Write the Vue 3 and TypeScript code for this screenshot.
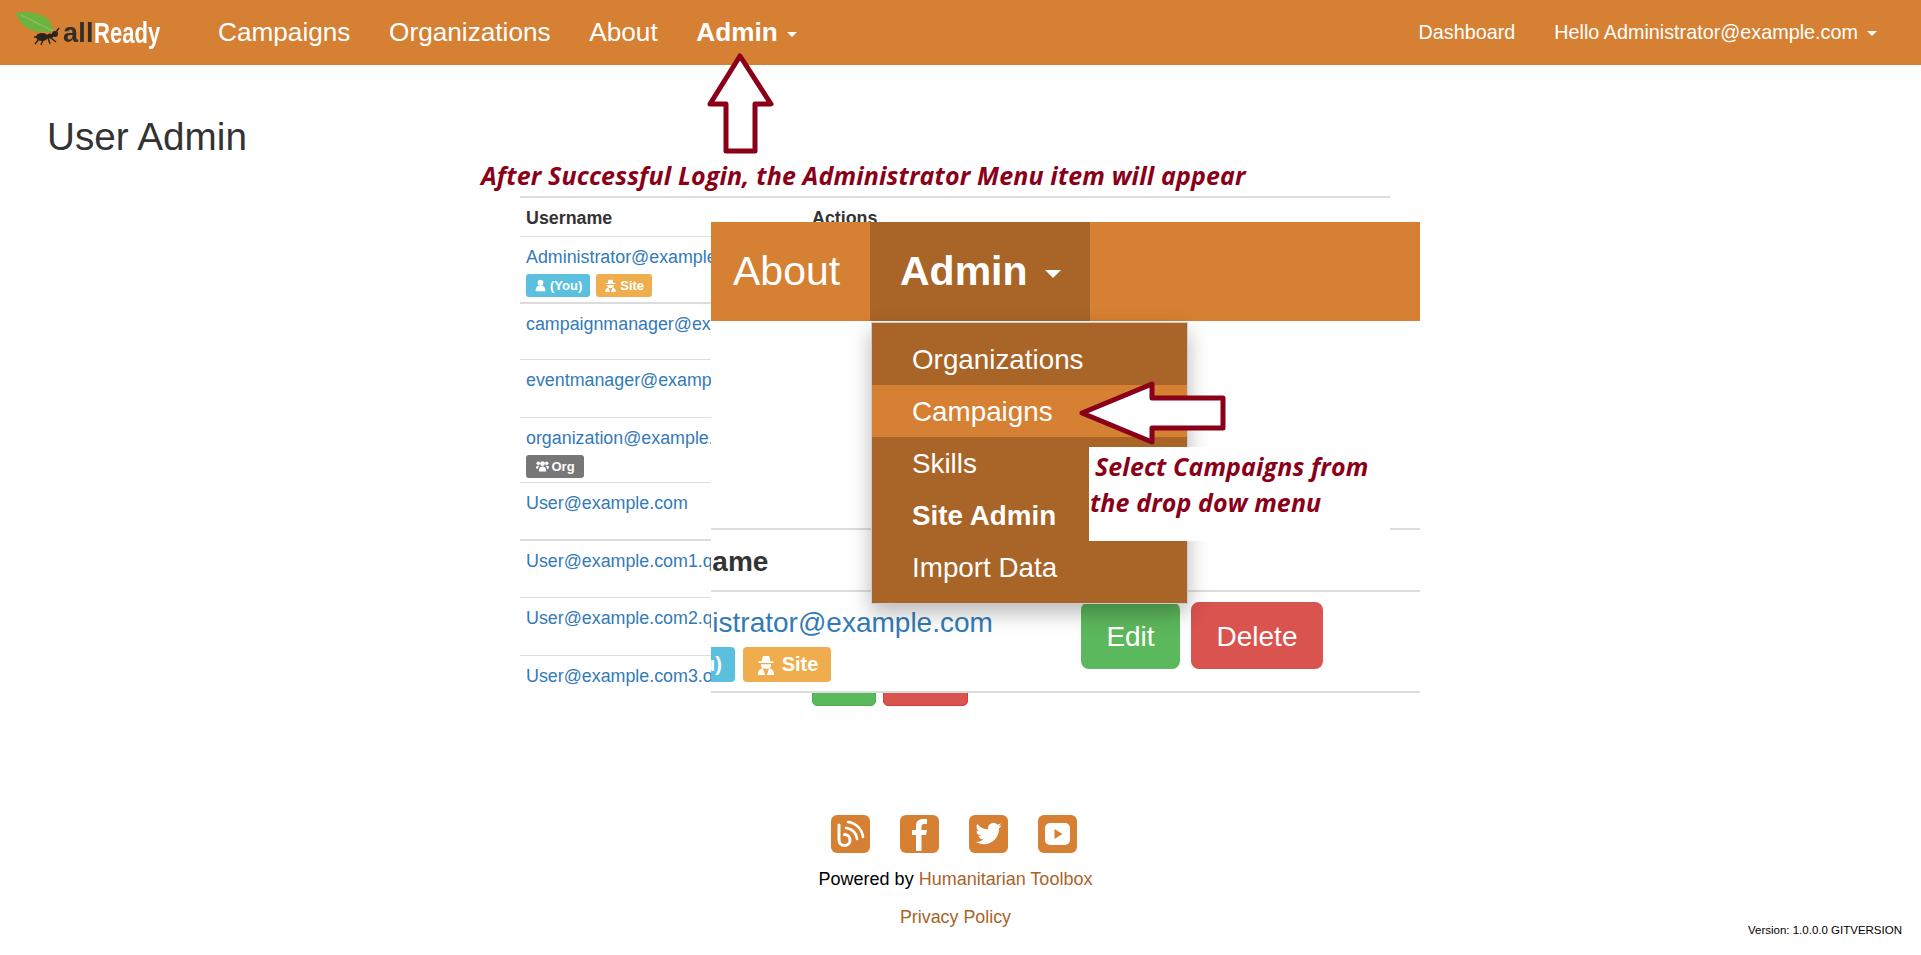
<script setup lang="ts">
interface UserRow {
  name: string
  height: number
  thick?: boolean
  badges?: { cls: string; icon: string; text: string }[]
}
const leftNav: string[] = ['Campaigns', 'Organizations', 'About']
const menu: { label: string; cls?: string }[] = [
  { label: 'Organizations' },
  { label: 'Campaigns', cls: 'hover' },
  { label: 'Skills' },
  { label: 'Site Admin', cls: 'strong' },
  { label: 'Import Data' },
]
const rows: UserRow[] = [
  {
    name: 'Administrator@example.com',
    height: 66,
    badges: [
      { cls: 'info', icon: 'user', text: '(You)' },
      { cls: 'warn', icon: 'spy', text: 'Site' },
    ],
  },
  { name: 'campaignmanager@example.com', height: 57, thick: true },
  { name: 'eventmanager@example.com', height: 58 },
  { name: 'organization@example.com', height: 65, badges: [{ cls: 'dark', icon: 'users', text: 'Org' }] },
  { name: 'User@example.com', height: 57 },
  { name: 'User@example.com1.qa', height: 58, thick: true },
  { name: 'User@example.com2.qa', height: 58 },
  { name: 'User@example.com3.org', height: 60 },
]
</script>

<template>
  <div class="page">
    <nav class="nav">
      <a class="brand">
        <svg class="brand-mark" viewBox="0 0 48 36" width="48" height="36">
          <path d="M0 2 C10 0 22 1 30 6 C35 10 38 14 38 20 C28 22 16 21 9 15 C5 11 3 6 0 2Z" fill="#6db33f" />
          <path d="M6 4 C16 9 26 14 38 20" stroke="#8cc863" stroke-width="1" fill="none" />
          <ellipse cx="27" cy="26" rx="6" ry="4" fill="#26241f" />
          <ellipse cx="35" cy="25" rx="3" ry="2.6" fill="#26241f" />
          <circle cx="40" cy="23" r="3" fill="#26241f" />
          <path d="M24 28 L20 33 M28 29 L26 34 M33 27 L35 33 M36 27 L41 31 M41 21 L44 17 M22 26 L19 26" stroke="#26241f" stroke-width="1.4" fill="none" />
        </svg>
        <span class="brand-all">all</span><span class="brand-ready">Ready</span>
      </a>
      <a v-for="item in leftNav" :key="item" class="nav-link">{{ item }}</a>
      <a class="nav-link bold">Admin<i class="caret" /></a>
      <div class="nav-right">
        <a class="nav-link small">Dashboard</a>
        <a class="nav-link small">Hello Administrator@example.com<i class="caret" /></a>
      </div>
    </nav>

    <main class="main">
      <h1 class="title">User Admin</h1>
      <section class="table">
        <div class="thead">
          <div>Username</div>
          <div>Actions</div>
        </div>
        <div
          v-for="row in rows"
          :key="row.name"
          class="trow"
          :class="{ thick: row.thick }"
          :style="{ height: row.height + 'px' }"
        >
          <div class="cell-name">
            <a class="user-link">{{ row.name }}</a>
            <div v-if="row.badges" class="badges">
              <span v-for="b in row.badges" :key="b.text" class="badge" :class="b.cls">
                <svg viewBox="0 0 16 16" class="badge-icon">
                  <g v-if="b.icon === 'user'" fill="currentColor">
                    <circle cx="8" cy="4.5" r="3.5" /><path d="M2 15 C2 9 5 8 8 8 C11 8 14 9 14 15Z" />
                  </g>
                  <g v-else-if="b.icon === 'spy'" fill="currentColor">
                    <path d="M4.500 5 L5.500 0.800 H10.500 L11.500 5 H14 V6.300 H2 V5Z" />
                    <path d="M4 7.300 H12 V8.500 C12 10 10 11 8 11 C6 11 4 10 4 8.500Z" />
                    <path d="M1.500 16 C1.500 12.500 3 11 5.500 10.500 L7.300 16Z M14.500 16 C14.500 12.500 13 11 10.500 10.500 L8.700 16Z" />
                  </g>
                  <g v-else fill="currentColor">
                    <circle cx="8" cy="4.5" r="3" /><circle cx="2.8" cy="4" r="2.2" /><circle cx="13.2" cy="4" r="2.2" />
                    <path d="M3.500 14 C3.500 10 5 8 8 8 C11 8 12.500 10 12.500 14Z" /><path d="M0 10 C0 7.500 1 7 3 7 L4 7.500 C3 9 2.500 10 2.500 11Z M16 10 C16 7.500 15 7 13 7 L12 7.500 C13 9 13.500 10 13.500 11Z" />
                  </g>
                </svg>
                {{ b.text }}
              </span>
            </div>
          </div>
          <div class="cell-actions">
            <a class="btn success">Edit</a>
            <a class="btn danger">Delete</a>
          </div>
        </div>
      </section>
    </main>

    <footer class="footer">
      <div class="footer-center">
        <div class="social">
          <svg viewBox="0 0 39 38" class="social-icon">
            <rect width="39" height="38" rx="6" fill="#d68033" />
            <g fill="none" stroke="#fff" stroke-linecap="round">
              <path d="M8 10 V25 A5.500 5.500 0 1 0 13.500 19.500" stroke-width="3" />
              <path d="M15 13 A12 12 0 0 1 26 24" stroke-width="2.600" />
              <path d="M17 7 A17 17 0 0 1 32 22" stroke-width="2.600" />
            </g>
          </svg>
          <svg viewBox="0 0 39 38" class="social-icon">
            <rect width="39" height="38" rx="6" fill="#d68033" />
            <path d="M16 36 V20 H12 V15 H16 V11 C16 6 19 4 23 4 H27 V9 H24 C22 9 21.500 10 21.500 11.500 V15 H27 L26 20 H21.500 V36Z" fill="#fff" />
          </svg>
          <svg viewBox="0 0 39 38" class="social-icon">
            <rect width="39" height="38" rx="6" fill="#d68033" />
            <g transform="translate(6.500 5.500) scale(1.09)">
              <path d="M23.953 4.57a10 10 0 01-2.825.775 4.958 4.958 0 002.163-2.723c-.951.555-2.005.959-3.127 1.184a4.92 4.92 0 00-8.384 4.482C7.69 8.095 4.067 6.13 1.64 3.162a4.822 4.822 0 00-.666 2.475c0 1.71.87 3.213 2.188 4.096a4.904 4.904 0 01-2.228-.616v.06a4.923 4.923 0 003.946 4.827 4.996 4.996 0 01-2.212.085 4.936 4.936 0 004.604 3.417 9.867 9.867 0 01-6.102 2.105c-.39 0-.779-.023-1.17-.067a13.995 13.995 0 007.557 2.209c9.053 0 13.998-7.496 13.998-13.985 0-.21 0-.42-.015-.63A9.935 9.935 0 0024 4.59z" fill="#fff" />
            </g>
          </svg>
          <svg viewBox="0 0 39 38" class="social-icon">
            <rect width="39" height="38" rx="6" fill="#d68033" />
            <rect x="7" y="8" width="25" height="22" rx="5" fill="#fff" />
            <path d="M16.500 14 L24.500 19 L16.500 24Z" fill="#d68033" />
          </svg>
        </div>
        <p class="powered">Powered by <a class="foot-link">Humanitarian Toolbox</a></p>
        <p class="privacy"><a class="foot-link">Privacy Policy</a></p>
      </div>
      <div class="version">Version: 1.0.0.0 GITVERSION</div>
    </footer>

    <!-- magnified callout lying over the page -->
    <section class="callout">
      <div class="callout-bar">
        <a class="callout-about">About</a>
        <a class="callout-admin">Admin<i class="caret big" /></a>
      </div>
      <div class="callout-body">
        <div class="callout-head">Username</div>
        <div class="callout-row">
          <a class="callout-name">Administrator@example.com</a>
          <div class="callout-badges">
            <span class="cbadge info">
              <svg viewBox="0 0 16 16" class="cbadge-icon"><circle cx="8" cy="4.500" r="3.500" fill="currentColor" /><path d="M2 15 C2 9 5 8 8 8 C11 8 14 9 14 15Z" fill="currentColor" /></svg>
              (You)
            </span>
            <span class="cbadge warn">
              <svg viewBox="0 0 16 16" class="cbadge-icon" fill="currentColor"><path d="M4.500 5 L5.500 0.800 H10.500 L11.500 5 H14 V6.300 H2 V5Z" /><path d="M4 7.300 H12 V8.500 C12 10 10 11 8 11 C6 11 4 10 4 8.500Z" /><path d="M1.500 16 C1.500 12.500 3 11 5.500 10.500 L7.300 16Z M14.500 16 C14.500 12.500 13 11 10.500 10.500 L8.700 16Z" /></svg>
              Site
            </span>
          </div>
          <div class="callout-actions">
            <a class="cbtn success">Edit</a>
            <a class="cbtn danger">Delete</a>
          </div>
        </div>
      </div>
      <ul class="dropdown">
        <li v-for="m in menu" :key="m.label" :class="m.cls">{{ m.label }}</li>
      </ul>
      <div class="select-note">
        <div class="note-one">Select Campaigns from</div>
        <div>the drop dow menu</div>
      </div>
    </section>

    <div class="login-note">After Successful Login, the Administrator Menu item will appear</div>

    <svg class="arrow-up" viewBox="700 50 80 110" width="80" height="110">
      <polygon points="740,56 771,104 755,104 755,151 726,151 726,104 710,104" fill="#fff" stroke="#8a0018" stroke-width="5" stroke-linejoin="round" />
    </svg>
    <svg class="arrow-left" viewBox="1070 375 160 75" width="160" height="75">
      <polygon points="1082,413 1152,384 1152,398 1223,398 1223,428 1152,428 1152,442" fill="#fff" stroke="#8a0018" stroke-width="5" stroke-linejoin="round" />
    </svg>
  </div>
</template>

<style>
html, body { margin: 0; background: #fff; }
</style>

<style scoped>
.page {
  position: relative;
  width: 1921px;
  height: 955px;
  overflow: hidden;
  font-family: "Liberation Sans", Arial, sans-serif;
  color: #333;
  background: #fff;
}
a { text-decoration: none; }
.nav {
  display: flex;
  align-items: center;
  height: 65px;
  background: #d68033;
  color: #fff;
}
.brand {
  display: flex;
  align-items: center;
  box-sizing: border-box;
  width: 218px;
  padding: 0 0 0 15px;
  height: 65px;
  font-size: 27px;
  font-weight: 700;
  filter: blur(0.4px);
}
.brand-mark { margin-top: -8px; flex: none; }
.brand-all { color: #2f2e2b; letter-spacing: 0.2px; margin-top: 1px; }
.brand-ready {
  display: inline-block;
  color: #fff;
  font-size: 29px;
  margin-top: 1px;
  transform: scaleX(0.76);
  transform-origin: left center;
  width: 66px;
}
.nav-link {
  color: #fff;
  font-size: 26.200px;
  padding-right: 38.600px;
  white-space: nowrap;
}
.nav-link.bold { font-weight: 700; }
.nav-link.small { font-size: 19.800px; padding-right: 39px; }
.nav-right { margin-left: auto; display: flex; align-items: center; margin-right: 5px; }
.caret {
  display: inline-block;
  width: 0;
  height: 0;
  margin-left: 9px;
  vertical-align: middle;
  border-top: 5px solid #fff;
  border-left: 5px solid transparent;
  border-right: 5px solid transparent;
}
.caret.big {
  margin-left: 17px;
  border-top-width: 8px;
  border-left-width: 8px;
  border-right-width: 8px;
  margin-top: 4px;
}
.main { padding: 50px 0 0 47px; }
.title {
  margin: 0;
  font-size: 38.700px;
  line-height: 44px;
  font-weight: 400;
  color: #333;
}
.table {
  margin: 37px 0 0 473px;
  width: 870px;
  font-size: 17.850px;
}
.thead {
  display: grid;
  grid-template-columns: 292px 1fr;
  height: 38px;
  border-top: 2px solid #ddd;
  font-weight: 700;
  line-height: 40px;
}
.thead div:first-child, .cell-name { padding-left: 6px; }
.trow {
  display: grid;
  grid-template-columns: 292px 1fr;
  box-sizing: border-box;
  border-top: 1px solid #ddd;
  padding-top: 8px;
}
.trow.thick { border-top-width: 2px; }
.user-link { color: #337ab7; line-height: 25px; white-space: nowrap; display: block; }
.badges { display: flex; gap: 6px; margin-top: 4px; }
.badge {
  display: inline-flex;
  align-items: center;
  justify-content: center;
  gap: 3px;
  height: 23px;
  padding: 0 8px;
  border-radius: 3px;
  color: #fff;
  font-size: 13px;
  font-weight: 700;
}
.badge.dark { padding: 0 9.500px; }
.badge-icon { width: 13px; height: 13px; }
.info { background: #5bc0de; }
.warn { background: #f0ad4e; }
.dark { background: #777; }
.cell-actions { display: flex; gap: 7px; align-items: flex-start; }
.btn {
  box-sizing: border-box;
  height: 42px;
  line-height: 40px;
  text-align: center;
  border-radius: 5px;
  color: #fff;
  border: 1px solid;
}
.btn.success { width: 64px; }
.btn.danger { width: 85px; }
.success { background: #5cb85c; border-color: #4cae4c; }
.danger { background: #d9534f; border-color: #d43f3a; }
.footer {
  display: grid;
  grid-template-columns: 1fr auto 1fr;
  box-sizing: border-box;
  padding: 0 19px 0 9px;
  margin-top: 100px;
  font-size: 18px;
}
.footer-center { grid-column: 2; display: flex; flex-direction: column; align-items: center; }
.social { display: flex; gap: 30px; height: 38px; margin-right: 3px; }
.social-icon { width: 39px; height: 38px; }
.powered { margin: 13px 0 0; color: #000; line-height: 26px; }
.privacy { margin: 12px 0 0; line-height: 26px; font-size: 17.850px; }
.foot-link { color: #a9642a; }
.version {
  grid-column: 3;
  justify-self: end;
  align-self: end;
  font-size: 11.500px;
  line-height: 14px;
  color: #000;
  margin-bottom: -7px;
}
.callout {
  position: absolute;
  left: 711px;
  top: 222px;
  width: 709px;
  height: 471px;
  overflow: hidden;
  background: #fff;
}
.callout-bar {
  display: flex;
  align-items: center;
  height: 99px;
  background: #d68033;
  color: #fff;
  font-size: 41px;
}
.callout-about { color: #fff; width: 159px; padding-left: 22px; box-sizing: border-box; }
.callout-admin {
  display: flex;
  align-items: center;
  box-sizing: border-box;
  width: 220px;
  height: 99px;
  padding-left: 30px;
  background: #a96427;
  color: #fff;
  font-weight: 700;
}
.callout-body { padding-top: 207px; font-size: 28px; }
.callout-head {
  border-top: 2px solid #ddd;
  height: 60px;
  line-height: 63px;
  text-indent: -78px;
  font-weight: 700;
  color: #333;
  white-space: nowrap;
}
.callout-row {
  position: relative;
  border-top: 2px solid #ddd;
  border-bottom: 2px solid #ddd;
  height: 99px;
}
.callout-name {
  display: block;
  margin-left: -78px;
  padding-top: 13px;
  line-height: 36px;
  color: #337ab7;
  white-space: nowrap;
}
.callout-badges { display: flex; gap: 8px; margin: 6px 0 0 -78px; }
.cbadge {
  display: inline-flex;
  align-items: center;
  justify-content: center;
  gap: 6px;
  height: 35px;
  box-sizing: border-box;
  border-radius: 4px;
  color: #fff;
  font-size: 20px;
  font-weight: 700;
}
.cbadge.info { width: 102px; }
.cbadge.warn { width: 88px; }
.cbadge-icon { width: 20px; height: 20px; }
.callout-actions {
  position: absolute;
  left: 368px;
  top: 8px;
  display: flex;
  gap: 7px;
}
.cbtn {
  box-sizing: border-box;
  height: 71px;
  line-height: 69px;
  text-align: center;
  border: 2px solid;
  border-radius: 10px;
  color: #fff;
}
.cbtn.success { width: 103px; }
.cbtn.danger { width: 136px; }
.dropdown {
  position: absolute;
  left: 160px;
  top: 100px;
  box-sizing: border-box;
  width: 317px;
  height: 282px;
  margin: 0;
  padding: 10px 0;
  list-style: none;
  background: #a96427;
  border: 1.500px solid #ccc;
  box-shadow: 0 9px 20px rgba(0, 0, 0, 0.28);
  color: #fff;
  font-size: 27.800px;
}
.dropdown li {
  height: 52px;
  line-height: 53px;
  padding-left: 40px;
}
.dropdown li.hover { background: #d68033; }
.dropdown li.strong { font-weight: 700; }
.select-note,
.login-note {
  font-family: "Open Sans", sans-serif;
  font-style: italic;
  font-weight: 700;
  color: #8a0018;
  white-space: nowrap;
}
.select-note {
  position: absolute;
  left: 378px;
  top: 225px;
  width: 301px;
  height: 94px;
  box-sizing: border-box;
  background: #fff;
  font-size: 25px;
  letter-spacing: 0.1px;
  line-height: 36px;
  padding: 1px 0 0 1px;
}
.note-one { padding-left: 5px; }
.login-note {
  position: absolute;
  left: 481px;
  top: 158px;
  font-size: 25px;
  letter-spacing: 0.14px;
  line-height: 34px;
}
.arrow-up { position: absolute; left: 700px; top: 50px; }
.arrow-left { position: absolute; left: 1070px; top: 375px; }
</style>
